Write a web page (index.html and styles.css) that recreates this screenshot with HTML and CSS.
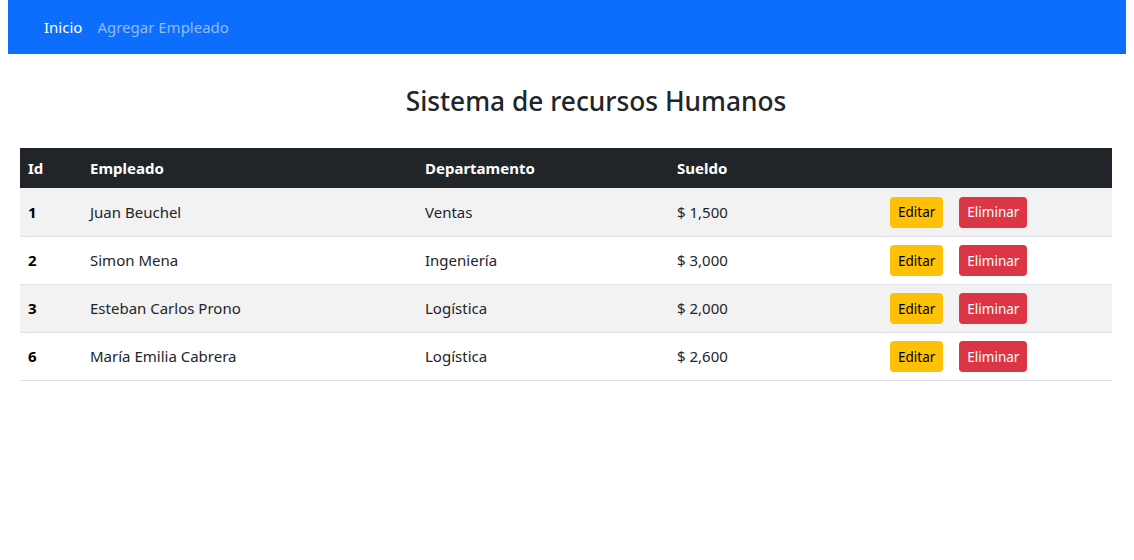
FILE: index.html
```html
<!DOCTYPE html>
<html lang="es">
<head>
<meta charset="utf-8">
<title>Sistema de recursos Humanos</title>
<link rel="stylesheet" href="styles.css">
</head>
<body>
<nav class="navbar">
  <a class="nav-link active" href="#">Inicio</a>
  <a class="nav-link" href="#">Agregar Empleado</a>
</nav>
<main class="main">
  <h3 class="title">Sistema de recursos Humanos</h3>
  <table class="table">
    <colgroup>
      <col class="c-id"><col class="c-emp"><col class="c-dep"><col class="c-sue"><col class="c-act">
    </colgroup>
    <thead>
      <tr><th>Id</th><th>Empleado</th><th>Departamento</th><th>Sueldo</th><th></th></tr>
    </thead>
    <tbody>
      <tr class="odd"><th>1</th><td>Juan Beuchel</td><td>Ventas</td><td>$ 1,500</td><td class="act"><div class="actions"><button class="btn btn-warning">Editar</button><button class="btn btn-danger">Eliminar</button></div></td></tr>
      <tr><th>2</th><td>Simon Mena</td><td>Ingeniería</td><td>$ 3,000</td><td class="act"><div class="actions"><button class="btn btn-warning">Editar</button><button class="btn btn-danger">Eliminar</button></div></td></tr>
      <tr class="odd"><th>3</th><td>Esteban Carlos Prono</td><td>Logística</td><td>$ 2,000</td><td class="act"><div class="actions"><button class="btn btn-warning">Editar</button><button class="btn btn-danger">Eliminar</button></div></td></tr>
      <tr><th>6</th><td>María Emilia Cabrera</td><td>Logística</td><td>$ 2,600</td><td class="act"><div class="actions"><button class="btn btn-warning">Editar</button><button class="btn btn-danger">Eliminar</button></div></td></tr>
    </tbody>
  </table>
</main>
</body>
</html>
```
FILE: styles.css
```css
* { box-sizing: border-box; }
html, body { background: #fff; }
body {
  margin: 0 8px;
  font-family: "Noto Sans", "Open Sans", sans-serif;
  font-size: 15px;
  color: #212529;
}
.navbar {
  height: 54px;
  background: #0d6efd;
  display: flex;
  align-items: center;
  padding-left: 28px;
  padding-bottom: 1px;
}
.nav-link {
  color: rgba(255,255,255,.55);
  text-decoration: none;
  padding: 0 7px 0 8px;
  font-size: 15px;
  line-height: 24px;
}
.nav-link.active { color: #fff; }
.main { padding: 0 14px 0 12px; }
.title {
  margin: 29px 0 29px;
  padding-left: 60px;
  text-align: center;
  font-size: 26.3px;
  font-weight: 500;
  line-height: 36px;
}
.table {
  width: 100%;
  border-collapse: collapse;
  table-layout: fixed;
}
.c-id { width: 62px; }
.c-emp { width: 335px; }
.c-dep { width: 252px; }
.c-sue { width: 213px; }
thead th {
  background: #212529;
  color: #fff;
  height: 40px;
  padding: 0 8px;
  text-align: left;
  font-weight: 700;
}
tbody th, tbody td {
  height: 48px;
  padding: 0 8px;
  text-align: left;
  border-bottom: 1px solid #dee2e6;
  color: #212529;
}
tbody td.act { padding-top: 1px; }
tbody th { font-weight: 700; color: #000; }
tbody tr.odd th, tbody tr.odd td { background: #f2f2f2; }
.actions { display: flex; gap: 16px; }
.btn {
  border: 0;
  border-radius: 4px;
  height: 31px;
  padding: 0 8px;
  font-family: inherit;
  font-size: 13.5px;
}
.btn-warning { background: #ffc107; color: #000; }
.btn-danger { background: #dc3545; color: #fff; }
```
